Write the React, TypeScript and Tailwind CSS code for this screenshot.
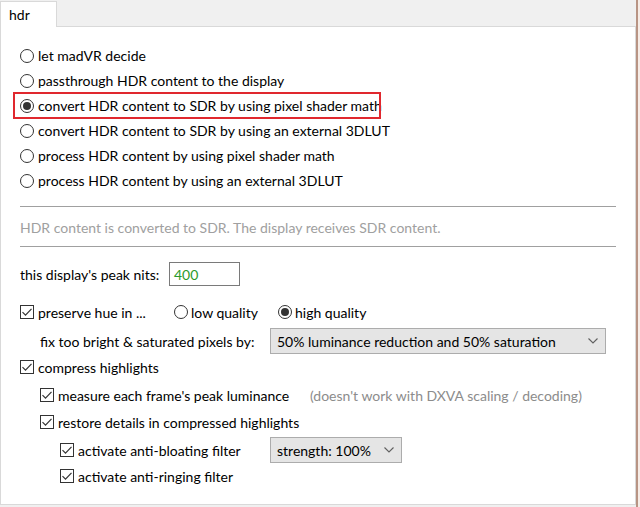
import React from "react";

// small windows-style controls
function Radio({ checked }: { checked?: boolean }) {
  return (
    <span className="flex h-[14px] w-[14px] shrink-0 items-center justify-center rounded-full border border-[#333333] bg-white">
      {checked && <span className="h-[8px] w-[8px] rounded-full bg-[#333333]" />}
    </span>
  );
}

function Check() {
  return (
    <span className="flex h-[14px] w-[14px] shrink-0 items-center justify-center border border-[#333333] bg-white">
      <svg width="12" height="12" viewBox="0 0 12 12" fill="none">
        <path d="M1.5 6.2 L4.5 9.2 L10.5 2.8" stroke="#333333" strokeWidth="1.2" />
      </svg>
    </span>
  );
}

function Chevron() {
  return (
    <svg width="10" height="6" viewBox="0 0 10 6" fill="none">
      <path d="M0.5 0.5 L5 5 L9.5 0.5" stroke="#606060" strokeWidth="1.1" />
    </svg>
  );
}

const radios = [
  "let madVR decide",
  "passthrough HDR content to the display",
  "convert HDR content to SDR by using pixel shader math",
  "convert HDR content to SDR by using an external 3DLUT",
  "process HDR content by using pixel shader math",
  "process HDR content by using an external 3DLUT",
];

export default function App() {
  return (
    <div
      className="flex h-[507px] w-[640px] overflow-hidden whitespace-nowrap bg-[#f0f0f0] text-[14px] text-black"
      style={{ fontFamily: 'Lato, "Open Sans", sans-serif' }}
    >
      <div className="flex w-[636px] flex-col">
        {/* tab strip */}
        <div className="flex h-[26px] shrink-0 items-end">
          <div className="relative z-10 -mb-px flex h-[26px] w-[57px] items-center border border-b-0 border-[#d9d9d9] bg-white pl-[8px]">
            hdr
          </div>
        </div>

        {/* page */}
        <div className="flex h-[479px] flex-col border border-[#d9d9d9] bg-white px-[19px] pt-[16px]">
          {radios.map((r, i) => (
            <div key={r} className="relative flex h-[25px] items-center gap-[4px]">
              <Radio checked={i === 2} />
              <span>{r}</span>
              {i === 2 && (
                <span className="absolute left-[-7px] top-[-1px] h-[27px] w-[368px] border-2 border-[#e0282e]" />
              )}
            </div>
          ))}

          <div className="mt-[13px] h-px bg-[#a0a0a0]" />
          <div className="mt-[10px] flex h-[20px] items-center text-[#a0a0a0]">
            HDR content is converted to SDR. The display receives SDR content.
          </div>
          <div className="mt-[9px] h-px bg-[#a0a0a0]" />

          <div className="mt-[15px] flex h-[24px] items-center">
            <span className="w-[149px]">this display's peak nits:</span>
            <div className="flex h-[24px] w-[71px] items-center border border-[#7a7a7a] pl-[4px] text-[#2b9a2b]">
              400
            </div>
          </div>

          <div className="mt-[14px] flex h-[24px] items-center">
            <div className="flex w-[154px] items-center gap-[4px]">
              <Check />
              <span>preserve hue in ...</span>
            </div>
            <div className="flex w-[104px] items-center gap-[3px]">
              <Radio />
              <span>low quality</span>
            </div>
            <div className="flex items-center gap-[3px]">
              <Radio checked />
              <span>high quality</span>
            </div>
          </div>

          <div className="mt-[4px] flex h-[26px] items-center">
            <span className="w-[250px] pl-[20px]">fix too bright &amp; saturated pixels by:</span>
            <div className="flex h-[26px] w-[336px] items-center justify-between border border-[#acacac] bg-[#e5e5e5] pl-[6px] pr-[7px]">
              <span>50% luminance reduction and 50% saturation</span>
              <Chevron />
            </div>
          </div>

          <div className="mt-[1px] flex h-[24px] items-center gap-[4px]">
            <Check />
            <span>compress highlights</span>
          </div>

          <div className="mt-[4px] flex h-[24px] items-center pl-[20px]">
            <div className="flex w-[270px] items-center gap-[4px]">
              <Check />
              <span>measure each frame's peak luminance</span>
            </div>
            <span className="text-[#8c8c8c]">(doesn't work with DXVA scaling / decoding)</span>
          </div>

          <div className="mt-[3px] flex h-[24px] items-center gap-[4px] pl-[20px]">
            <Check />
            <span>restore details in compressed highlights</span>
          </div>

          <div className="mt-[3px] flex h-[26px] items-center pl-[40px]">
            <div className="flex w-[210px] items-center gap-[4px]">
              <Check />
              <span>activate anti-bloating filter</span>
            </div>
            <div className="flex h-[26px] w-[132px] items-center justify-between border border-[#acacac] bg-[#e5e5e5] pl-[6px] pr-[7px]">
              <span>strength: 100%</span>
              <Chevron />
            </div>
          </div>

          <div className="mt-[1px] flex h-[24px] items-center gap-[4px] pl-[40px]">
            <Check />
            <span>activate anti-ringing filter</span>
          </div>
        </div>
      </div>

      {/* window edge */}
      <div className="w-[4px] border-l-2 border-[#b89484] bg-[#f6ece6]" />
    </div>
  );
}
